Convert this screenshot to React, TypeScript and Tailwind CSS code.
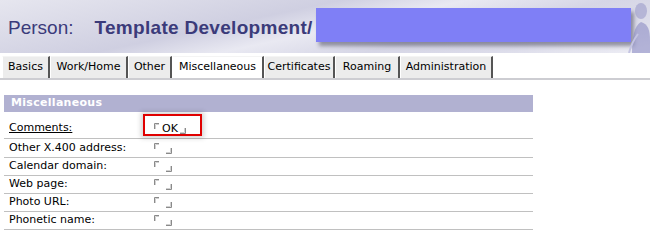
import React from "react";

function TL() {
  return (
    <svg width="5" height="6" viewBox="0 0 5 6" className="block shrink-0">
      <path d="M0.5 6V0.5H5" fill="none" stroke="#8a8a8a" strokeWidth="1" />
      <path d="M1.5 6V1.5H5" fill="none" stroke="#d0d0d0" strokeWidth="1" />
    </svg>
  );
}

function BR() {
  return (
    <svg width="6" height="6" viewBox="0 0 6 6" className="block shrink-0">
      <path d="M0 5.5H5.5V0" fill="none" stroke="#8a8a8a" strokeWidth="1" />
      <path d="M0 4.5H4.5V0" fill="none" stroke="#d0d0d0" strokeWidth="1" />
    </svg>
  );
}

function Field({ value, marked }: { value?: string; marked?: boolean }) {
  return (
    <div className="relative flex h-[11px] items-start">
      <TL />
      {value ? (
        <span className="ml-[3px] leading-[11px]">{value}</span>
      ) : (
        <span className="w-[5px]" />
      )}
      <div className="ml-[2px] self-end">
        <BR />
      </div>
      {marked && (
        <div className="absolute left-[-11px] top-[-9px] h-[22px] w-[59px] border-2 border-[#e00000] shadow-[0_0_5px_2px_rgba(0,0,0,0.18)]" />
      )}
    </div>
  );
}

const tabs = [
  { label: "Basics", w: "w-[48px]" },
  { label: "Work/Home", w: "w-[78px]" },
  { label: "Other", w: "w-[44px]" },
  { label: "Miscellaneous", w: "w-[92px]", active: true },
  { label: "Certificates", w: "w-[71px]" },
  { label: "Roaming", w: "w-[65px]" },
  { label: "Administration", w: "w-[93px]" },
];

const rows = [
  "Other X.400 address:",
  "Calendar domain:",
  "Web page:",
  "Photo URL:",
  "Phonetic name:",
];

export default function App() {
  return (
    <div className="h-[237px] w-[650px] overflow-hidden bg-white font-['DejaVu_Sans',sans-serif] text-[11px] text-black">
      {/* Header */}
      <div className="relative flex h-[53px] items-start bg-[linear-gradient(168deg,#e6e6ef_0%,#d9d9e7_22%,#cfcfe1_38%,#e9e9f2_52%,#d6d6e6_68%,#dcdcea_82%,#eeeef5_100%)]">
        <div className="flex items-baseline pl-[8px] pt-[18px] font-['Liberation_Sans',Arial,sans-serif] text-[19px] leading-[19px] text-[#3b3b7a]">
          <span>Person:</span>
          <span className="ml-[21px] font-bold tracking-[0.3px]">Template Development/</span>
        </div>
        <div className="ml-[3px] mt-[8px] h-[34px] w-[315px] bg-[#7f7ff6] shadow-[3px_4px_4px_rgba(40,40,60,0.45)]" />
        <svg
          className="absolute right-0 top-0"
          width="22"
          height="53"
          viewBox="0 0 22 53"
        >
          <ellipse cx="13" cy="11" rx="6" ry="8" fill="#8f8fc4" opacity="0.5" />
          <path
            d="M4 53 C4 38 6 26 13 22 C20 24 22 30 22 40 L22 53 Z"
            fill="#8383c0"
            opacity="0.55"
          />
          <path d="M1 53 C3 45 7 38 10 34" stroke="#c4c4e2" strokeWidth="2" fill="none" />
        </svg>
      </div>

      {/* Tabs */}
      <div className="flex border-b-2 border-[#cdcdd2] pl-[2px] pt-[3px]">
        {tabs.map((t) => (
          <div
            key={t.label}
            className={`flex h-[22px] ${t.w} items-center justify-center border-l border-t border-l-white border-t-[#f4f4f4] border-r-2 border-r-[#555555] ${
              t.active ? "bg-white" : "bg-[#ececec]"
            }`}
          >
            {t.label}
          </div>
        ))}
      </div>

      {/* Section */}
      <div className="ml-[4px] mt-[15px] w-[529px]">
        <div className="flex h-[17px] items-center bg-[#b1b1d1] pl-[7px] font-bold tracking-[0.3px] text-white">
          Miscellaneous
        </div>
        <div className="flex h-[27px] items-center border-b border-[#c0c0c0] pt-[7px]">
          <div className="w-[150px] pl-[5px] underline">Comments:</div>
          <Field value="OK" marked />
        </div>
        {rows.map((r, i) => (
          <div
            key={r}
            className={`flex ${i === 0 ? "h-[19px]" : "h-[18px]"} items-center border-b border-[#c0c0c0]`}
          >
            <div className="w-[150px] pl-[5px]">{r}</div>
            <Field />
          </div>
        ))}
      </div>
    </div>
  );
}
